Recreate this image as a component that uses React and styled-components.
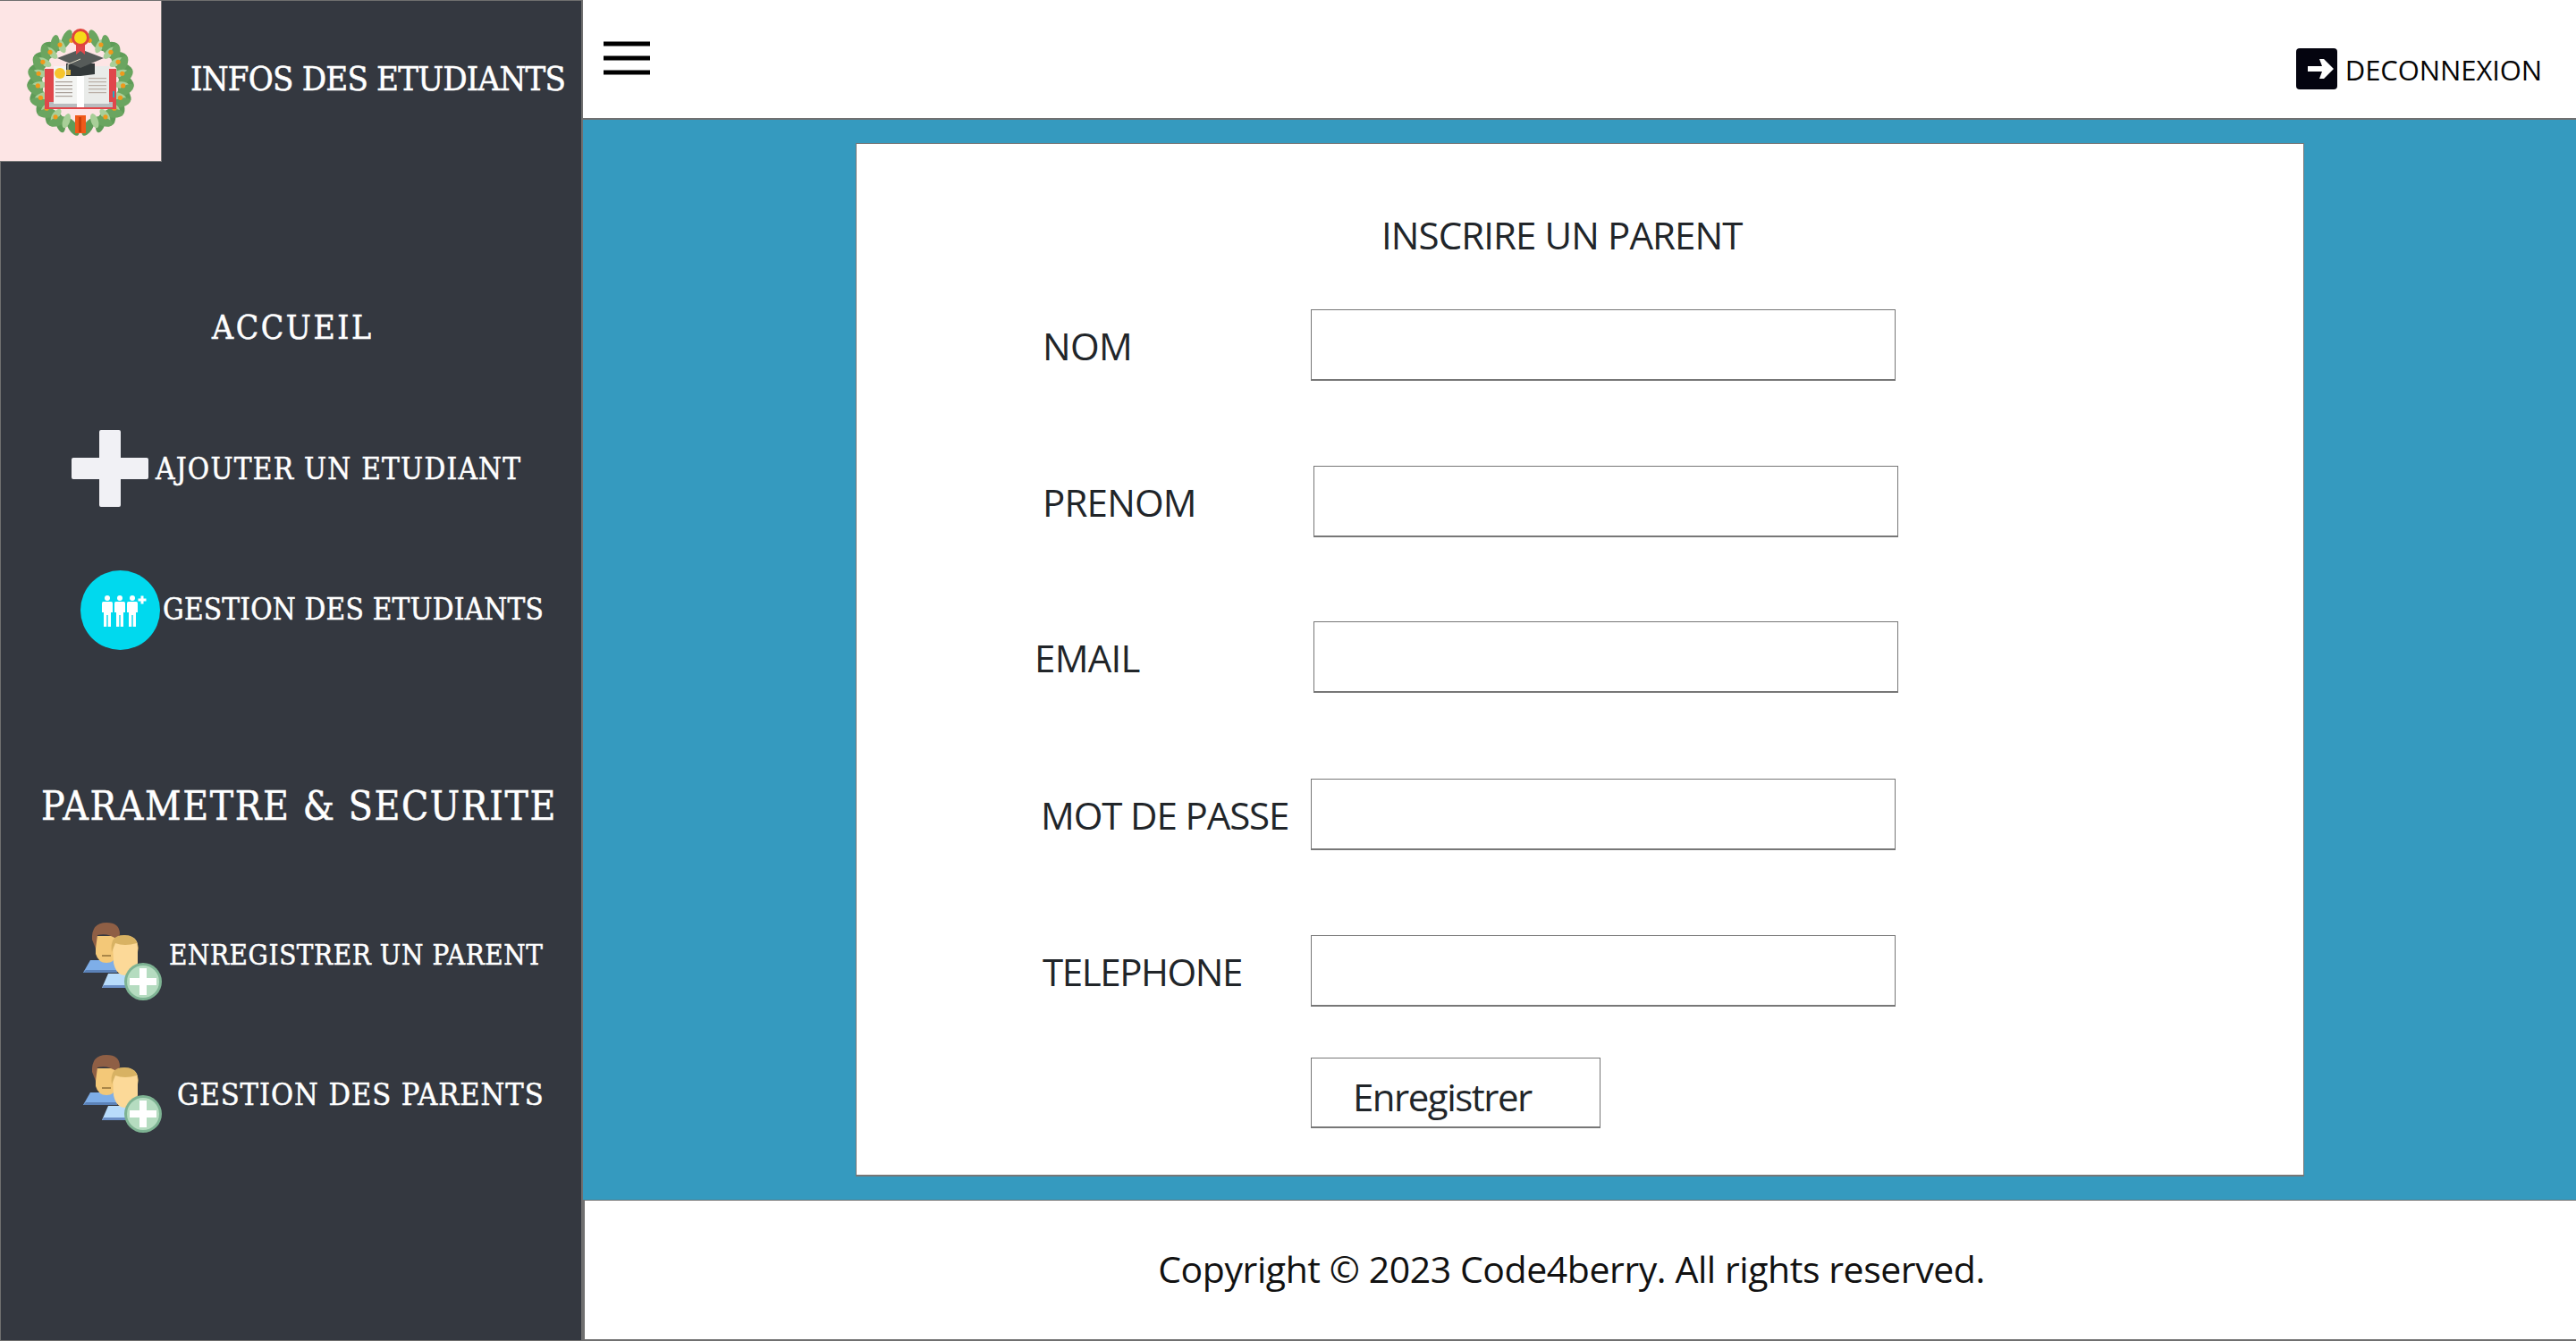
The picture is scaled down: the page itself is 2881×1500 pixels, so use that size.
import React from "react";
import styled, { createGlobalStyle } from "styled-components";

const Global = createGlobalStyle`
  html, body { margin: 0; padding: 0; background: #fff; }
  * { box-sizing: border-box; }
`;

const SLAB = `"DejaVu Serif Condensed", "DejaVu Serif", "Liberation Serif", serif`;
const UI = `"Open Sans", "Noto Sans", "Liberation Sans", sans-serif`;

const Page = styled.div`
  display: grid;
  grid-template-columns: 652px 1fr;
  width: 2881px;
  height: 1500px;
  overflow: hidden;
`;

const Sidebar = styled.aside`
  display: flex;
  flex-direction: column;
  background: #343840;
  border: 1px solid #6f6f6f;
  border-width: 1px 2px 1px 1px;
  height: 1500px;
`;

const Brand = styled.div`
  display: flex;
  align-items: center;
  height: 180px;
  flex: none;
`;

const LogoBox = styled.div`
  width: 181px;
  height: 180px;
  margin-left: -1px;
  background: #fde5e5;
  border-right: 1px solid #777;
  border-bottom: 1px solid #777;
  flex: none;
`;

const BrandTitle = styled.h1`
  margin: 0 0 6px 32px;
  font: 400 38px/1 ${SLAB};
  letter-spacing: -0.8px;
  -webkit-text-stroke: 0.5px #fff;
  color: #fff;
  white-space: nowrap;
`;

const SideRow = styled.div`
  display: flex;
  align-items: center;
  flex: none;
  height: ${(p) => p.$h}px;
  margin-top: ${(p) => p.$top}px;
  padding-left: ${(p) => p.$left}px;
  color: #fff;
`;

const SideText = styled.span`
  font: 400 ${(p) => p.$size}px/1 ${SLAB};
  letter-spacing: ${(p) => p.$track || 0}px;
  margin-left: ${(p) => p.$gap || 0}px;
  margin-bottom: ${(p) => p.$lift || 0}px;
  -webkit-text-stroke: 0.5px #fff;
  white-space: nowrap;
`;

const Main = styled.main`
  display: flex;
  flex-direction: column;
  min-width: 0;
  height: 1500px;
`;

const TopBar = styled.header`
  display: flex;
  align-items: flex-start;
  justify-content: space-between;
  height: 134px;
  flex: none;
  background: #fff;
  border-bottom: 2px solid #707070;
  padding: 46px 38px 0 23px;
`;

const Logout = styled.a`
  display: flex;
  align-items: center;
  gap: 9px;
  margin-top: 7px;
  font: 400 31px/46px ${UI};
  letter-spacing: -0.1px;
  color: #050505;
`;

const LogoutText = styled.span`
  padding-top: 2px;
`;

const Content = styled.section`
  flex: 1;
  display: flex;
  background: #359abf;
  padding: 26px 304px 26px 305px;
  min-height: 0;
`;

const Card = styled.div`
  flex: 1;
  background: #fff;
  border: 1px solid #777;
  border-bottom-width: 2px;
  display: flex;
  flex-direction: column;
  color: #212529;
`;

const CardTitle = styled.h2`
  margin: 76px 0 0 587px;
  font: 400 42px/52px ${UI};
  letter-spacing: -0.9px;
  white-space: nowrap;
`;

const FormRow = styled.div`
  display: flex;
  align-items: center;
  height: 80px;
  flex: none;
  margin-top: ${(p) => p.$top}px;
`;

const FieldLabel = styled.label`
  flex: none;
  width: ${(p) => p.$w}px;
  padding-left: ${(p) => p.$left}px;
  padding-top: 3px;
  font: 400 42px/1.2 ${UI};
  letter-spacing: ${(p) => p.$track}px;
  white-space: nowrap;
`;

const Field = styled.input`
  width: 654px;
  height: 80px;
  flex: none;
  background: #fff;
  border: 1px solid #777;
  border-bottom-width: 2px;
  outline: none;
  padding: 0 10px;
  border-radius: 0;
`;

const SubmitRow = styled.div`
  margin: 57px 0 0 508px;
`;

const Submit = styled.button`
  display: block;
  width: 324px;
  height: 79px;
  background: #fff;
  border: 1px solid #777;
  border-bottom-width: 2px;
  border-radius: 0;
  padding: 10px 0 0 46px;
  text-align: left;
  font: 400 42px/1 ${UI};
  letter-spacing: -1.5px;
  color: #212529;
`;

const Footer = styled.footer`
  height: 158px;
  flex: none;
  display: flex;
  align-items: center;
  justify-content: center;
  background: #fff;
  border-left: 2px solid #707070;
  border-bottom: 2px solid #707070;
  border-top: 1px solid #707070;
  padding-right: 20px;
  padding-bottom: 2px;
  font: 400 41px/1 ${UI};
  letter-spacing: -0.43px;
  color: #111;
`;

const IconSvg = styled.svg`
  display: block;
  flex: none;
`;

function leafPoints() {
  const out = [];
  for (let i = 0; i < 9; i++) {
    const a = ((118 + i * 16.5) * Math.PI) / 180;
    out.push({
      i,
      x: 90 + 46 * Math.cos(a),
      y: 91 - 46 * Math.sin(a),
      tangent: (-a * 180) / Math.PI + 90,
    });
  }
  return out;
}

function Branch() {
  const pts = leafPoints();
  return (
    <g>
      {pts.map((p) => (
        <g key={p.i} transform={`translate(${p.x} ${p.y}) rotate(${p.tangent})`}>
          <ellipse cx="-9" cy="-4" rx="11" ry="5" fill="#5f9c58" transform="rotate(38 -9 -4)" />
          <ellipse cx="9" cy="-4" rx="11" ry="5" fill="#6aa560" transform="rotate(-38 9 -4)" />
          <ellipse cx="0" cy="0" rx="4" ry="8.5" fill="#a8cf98" />
        </g>
      ))}
      {pts.map((p) => (
        <circle key={`b${p.i}`} cx={p.x + 13 * Math.cos((p.tangent * Math.PI) / 180)} cy={p.y + 13 * Math.sin((p.tangent * Math.PI) / 180)} r="2.6" fill="#ef9a1c" />
      ))}
    </g>
  );
}

function Logo() {
  return (
    <IconSvg width="180" height="179" viewBox="0 0 180 179">
      <Branch />
      <g transform="matrix(-1 0 0 1 180 0)"><Branch /></g>
      <rect x="84" y="128" width="12" height="20" fill="#f05a1a" />
      <rect x="88" y="130" width="3" height="17" fill="#c9420d" />
      <rect x="50" y="76" width="80" height="45" fill="#e0474b" />
      <rect x="55" y="113" width="71" height="6" fill="#b9bcbf" />
      <rect x="60" y="73" width="29" height="42" fill="#f3f4f2" />
      <rect x="90" y="73" width="32" height="42" fill="#e9ebe9" />
      <rect x="86" y="84" width="8" height="35" fill="#fff" />
      {[90, 94, 98, 102, 106].map((y) => (
        <g key={y}>
          <rect x="62" y={y} width="19" height="1.2" fill="#a99f98" />
          <rect x="99" y={y - 4} width="20" height="1.2" fill="#b9aea6" />
        </g>
      ))}
      <circle cx="67" cy="81" r="6" fill="#f7c52c" />
      <rect x="126" y="101" width="2" height="7" fill="#2aa6bf" />
      <polygon points="74,70 106,70 106,82 90,84 74,84" fill="#33393a" />
      <polygon points="64,64 90,54 116,64 90,75" fill="#565b59" />
      <path d="M90 65 L76 71 L76 78" fill="none" stroke="#e8e2cf" strokeWidth="1" />
      <rect x="74" y="77" width="5" height="6" fill="#d9b13a" />
      <polygon points="85,47 95,47 95,60 90,56 85,60" fill="#e0474b" />
      <circle cx="90" cy="41" r="10" fill="#e0453c" />
      <circle cx="90" cy="41" r="7" fill="#f6dc18" />
    </IconSvg>
  );
}

function PlusIcon() {
  return (
    <IconSvg width="86" height="86" viewBox="0 0 86 86">
      <path d="M31 2 Q31 0 33 0 H53 Q55 0 55 2 V31 H84 Q86 31 86 33 V53 Q86 55 84 55 H55 V84 Q55 86 53 86 H33 Q31 86 31 84 V55 H2 Q0 55 0 53 V33 Q0 31 2 31 H31 Z" fill="#f1f1f5" />
    </IconSvg>
  );
}

function Person({ x }) {
  return (
    <g fill="#fff">
      <circle cx={x} cy="31" r="3" />
      <path d={`M${x - 6} 37 Q${x - 6} 35 ${x - 4.5} 35 H${x + 4.5} Q${x + 6} 35 ${x + 6} 37 V47 H${x + 4} V63 H${x + 0.7} V50 H${x - 0.7} V63 H${x - 4} V47 H${x - 6} Z`} />
    </g>
  );
}

function GroupIcon() {
  return (
    <IconSvg width="89" height="89" viewBox="0 0 89 89">
      <circle cx="44.5" cy="44.5" r="44.5" fill="#00d9ee" />
      <Person x={30} />
      <Person x={44} />
      <Person x={58} />
      <path d="M67.5 28.5 h3 v3 h3 v3 h-3 v3 h-3 v-3 h-3 v-3 h3 Z" fill="#fff" />
    </IconSvg>
  );
}

function ParentIcon() {
  return (
    <IconSvg width="90" height="90" viewBox="0 0 90 90">
      <path d="M0 57 L8 43 H38 V57 Z" fill="#7eaee8" />
      <path d="M0 57 H38 V54 H3 Z" fill="#5b82b8" />
      <path d="M14 16 H38 V36 Q35 46 26 46 Q17 46 14 36 Z" fill="#f3c878" />
      <path d="M21 38 H31" stroke="#a98648" strokeWidth="2" />
      <path d="M10 20 Q9 1 26 1 Q41 1 41 14 L38 20 Q28 12 16 15 L14 30 Z" fill="#8f5f45" />
      <path d="M21 74 L28 58 H54 V74 Z" fill="#b8dcfb" />
      <path d="M21 74 H54 V71 H23 Z" fill="#6b8fc6" />
      <path d="M33 24 Q34 16 47 16 Q60 16 61 26 V46 Q58 60 47 60 Q37 60 34 46 Z" fill="#fcd998" />
      <path d="M32 34 Q29 14 47 15 Q62 15 62 34 L60 24 Q46 28 36 24 Z" fill="#d8b263" />
      <circle cx="67" cy="67" r="21" fill="#7eb393" />
      <circle cx="67" cy="67" r="18" fill="#b5dcc0" />
      <path d="M63 52 H71 V63 H82 V71 H71 V82 H63 V71 H52 V63 H63 Z" fill="#fff" />
    </IconSvg>
  );
}

function MenuIcon() {
  return (
    <IconSvg width="52" height="40" viewBox="0 0 52 40">
      <path d="M0 3 H52 M0 19 H52 M0 35 H52" stroke="#000" strokeWidth="5" />
    </IconSvg>
  );
}

function LogoutIcon() {
  return (
    <IconSvg width="46" height="46" viewBox="0 0 46 46">
      <rect width="46" height="46" rx="4" fill="#04040f" />
      <path d="M13 20 H29 L26 12 H31 L42 23 L31 34 H26 L29 26 H13 Z" fill="#fff" />
    </IconSvg>
  );
}

export default function App() {
  return (
    <Page>
      <Global />
      <Sidebar>
        <Brand>
          <LogoBox><Logo /></LogoBox>
          <BrandTitle>INFOS DES ETUDIANTS</BrandTitle>
        </Brand>
        <SideRow $h={60} $top={155} $left={236}><SideText $size={37} $track={2.6}>ACCUEIL</SideText></SideRow>
        <SideRow $h={86} $top={85} $left={79}>
          <PlusIcon />
          <SideText $size={33} $gap={8} $track={1.25}>AJOUTER UN ETUDIANT</SideText>
        </SideRow>
        <SideRow $h={89} $top={71} $left={89}>
          <GroupIcon />
          <SideText $size={33} $gap={3} $track={0.2} $lift={3}>GESTION DES ETUDIANTS</SideText>
        </SideRow>
        <SideRow $h={60} $top={145} $left={45}><SideText $size={44} $track={1.6}>PARAMETRE &amp; SECURITE</SideText></SideRow>
        <SideRow $h={90} $top={99} $left={92}>
          <ParentIcon />
          <SideText $size={31} $gap={6} $track={0.62} $lift={16}>ENREGISTRER UN PARENT</SideText>
        </SideRow>
        <SideRow $h={90} $top={58} $left={92}>
          <ParentIcon />
          <SideText $size={34} $gap={15} $track={0.96}>GESTION DES PARENTS</SideText>
        </SideRow>
      </Sidebar>
      <Main>
        <TopBar>
          <MenuIcon />
          <Logout><LogoutIcon /><LogoutText>DECONNEXION</LogoutText></Logout>
        </TopBar>
        <Content>
          <Card>
            <CardTitle>INSCRIRE UN PARENT</CardTitle>
            <FormRow $top={57}><FieldLabel $w={508} $left={208} $track={-0.6}>NOM</FieldLabel><Field /></FormRow>
            <FormRow $top={95}><FieldLabel $w={511} $left={208} $track={-0.8}>PRENOM</FieldLabel><Field /></FormRow>
            <FormRow $top={94}><FieldLabel $w={511} $left={199} $track={-0.7}>EMAIL</FieldLabel><Field /></FormRow>
            <FormRow $top={96}><FieldLabel $w={508} $left={206} $track={-1.1}>MOT DE PASSE</FieldLabel><Field type="password" /></FormRow>
            <FormRow $top={95}><FieldLabel $w={508} $left={208} $track={-1.4}>TELEPHONE</FieldLabel><Field /></FormRow>
            <SubmitRow><Submit>Enregistrer</Submit></SubmitRow>
          </Card>
        </Content>
        <Footer>Copyright © 2023 Code4berry. All rights reserved.</Footer>
      </Main>
    </Page>
  );
}
